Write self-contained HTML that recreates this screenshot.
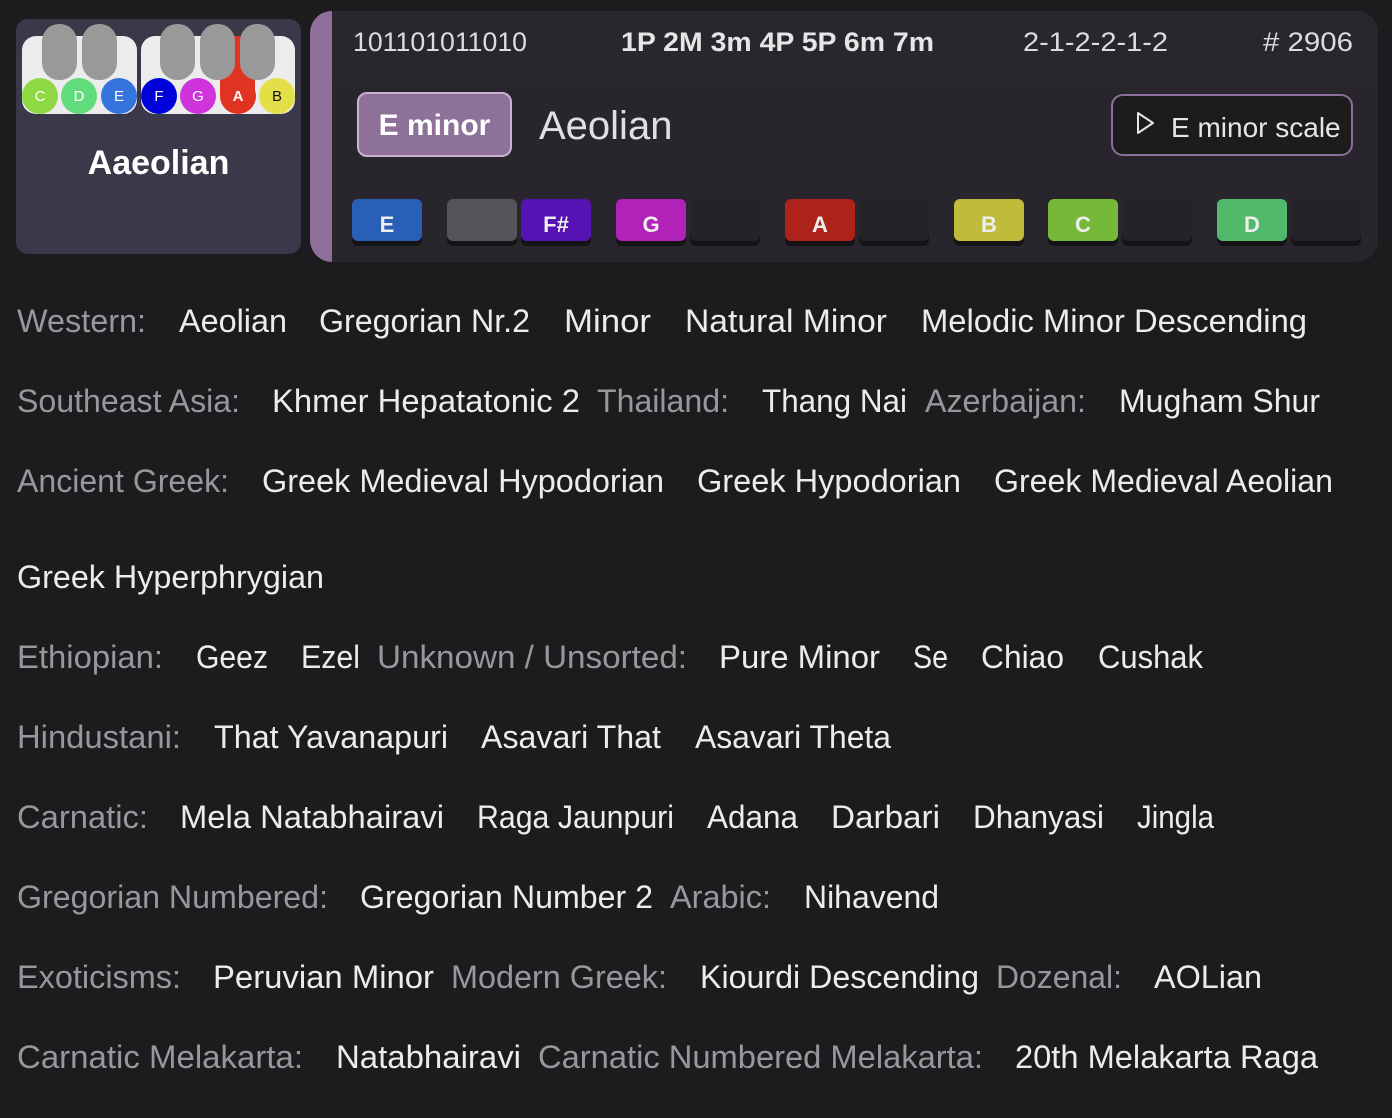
<!DOCTYPE html>
<html><head><meta charset="utf-8"><style>
body{margin:0;width:1392px;height:1118px;background:#1c1c1e;position:relative;overflow:hidden;font-family:"Liberation Sans",sans-serif}
.a{position:absolute}
.card{left:16px;top:19px;width:285px;height:235px;background:#3a3849;border-radius:12px}
.main{left:310px;top:11px;width:1068px;height:251px;background:#28262c;border-radius:22px;overflow:hidden}
.chip{position:absolute;top:199px;width:70px;height:42px;border-radius:6px;box-shadow:0 5px 0 #141416;color:#eee;font-weight:bold;font-size:22px;text-align:center;line-height:52px}
.wk{position:absolute;top:36px;height:78px;background:#ececec;border-radius:14px}
.bk{position:absolute;top:24px;width:35px;height:56px;background:#999;border-radius:17px}
.nc{position:absolute;top:78px;width:36px;height:36px;border-radius:50%;font-size:15px;text-align:center;line-height:38px;color:#fff}
svg text{font-family:"Liberation Sans",sans-serif;font-size:32px}
.l{fill:#98979c}.v{fill:#ececec}
.h{fill:#ddd;font-size:27px}
</style></head><body>
<div class="a card"></div>
<div class="wk" style="left:22px;width:115px"></div>
<div class="wk" style="left:141px;width:154px"></div>
<div class="a" style="left:220px;top:36px;width:35px;height:60px;background:#e03322"></div>
<div class="nc" style="left:22px;background:#8fd944">C</div>
<div class="nc" style="left:61px;background:#62dc7a">D</div>
<div class="nc" style="left:101px;background:#3573dd">E</div>
<div class="nc" style="left:141px;background:#0000d8">F</div>
<div class="nc" style="left:180px;background:#cf34dc">G</div>
<div class="nc" style="left:220px;background:#e03322;font-weight:bold">A</div>
<div class="nc" style="left:259px;background:#e2e046;color:#111">B</div>
<div class="bk" style="left:42px"></div><div class="bk" style="left:82px"></div>
<div class="bk" style="left:160px"></div><div class="bk" style="left:200px"></div><div class="bk" style="left:240px"></div>
<div class="a" style="left:16px;top:144px;width:285px;text-align:center;color:#fff;font-weight:bold;font-size:34px">Aaeolian</div>

<div class="a main">
 <div class="a" style="left:0;top:0;width:22px;height:251px;background:#8e6f99"></div>
 <div class="a" style="left:22px;top:0;right:0;height:76px;background:#29272d"></div>
</div>
<div class="a" style="left:357px;top:92px;width:151px;height:61px;background:#8e7199;border:2px solid #c9b3cf;border-radius:10px;color:#fff;font-weight:bold;font-size:30px;text-align:center;line-height:63px">E minor</div>
<div class="a" style="left:539px;top:104px;color:#e0e0e0;font-size:40px">Aeolian</div>
<div class="a" style="left:1111px;top:94px;width:238px;height:58px;background:#1c1c1e;border:2px solid #8e6f99;border-radius:12px"></div>
<svg class="a" style="left:1136px;top:111px" width="20" height="24"><path d="M2 2 L17 12 L2 22 Z" fill="none" stroke="#e6e6e6" stroke-width="2" stroke-linejoin="round"/></svg>
<div class="a" style="left:1171px;top:112px;color:#e6e6e6;font-size:28px">E minor scale</div>

<div class="chip" style="left:352px;background:#2a5fb8">E</div>
<div class="chip" style="left:447px;background:#555459"></div>
<div class="chip" style="left:521px;background:#5712b4">F#</div>
<div class="chip" style="left:616px;background:#b022b8">G</div>
<div class="chip" style="left:690px;background:#252328"></div>
<div class="chip" style="left:785px;background:#ad2219">A</div>
<div class="chip" style="left:859px;background:#252328"></div>
<div class="chip" style="left:954px;background:#bfbc3b">B</div>
<div class="chip" style="left:1048px;background:#76b939">C</div>
<div class="chip" style="left:1122px;background:#252328"></div>
<div class="chip" style="left:1217px;background:#50b96a">D</div>
<div class="chip" style="left:1291px;background:#252328"></div>

<svg class="a" style="left:0;top:0" width="1392" height="1118">
<text class="h" x="353" y="51" textLength="174" lengthAdjust="spacingAndGlyphs">101101011010</text>
<text class="h" x="621" y="51" textLength="313" lengthAdjust="spacingAndGlyphs" style="font-weight:bold;fill:#e6e6e6">1P 2M 3m 4P 5P 6m 7m</text>
<text class="h" x="1023" y="51" textLength="145" lengthAdjust="spacingAndGlyphs">2-1-2-2-1-2</text>
<text class="h" x="1263" y="51" textLength="90" lengthAdjust="spacingAndGlyphs"># 2906</text>
<g>
<text class="l" x="17" y="332" textLength="129" lengthAdjust="spacingAndGlyphs">Western:</text>
<text class="v" x="179" y="332" textLength="108" lengthAdjust="spacingAndGlyphs">Aeolian</text>
<text class="v" x="319" y="332" textLength="211" lengthAdjust="spacingAndGlyphs">Gregorian Nr.2</text>
<text class="v" x="564" y="332" textLength="87" lengthAdjust="spacingAndGlyphs">Minor</text>
<text class="v" x="685" y="332" textLength="202" lengthAdjust="spacingAndGlyphs">Natural Minor</text>
<text class="v" x="921" y="332" textLength="386" lengthAdjust="spacingAndGlyphs">Melodic Minor Descending</text>

<text class="l" x="17" y="412" textLength="223" lengthAdjust="spacingAndGlyphs">Southeast Asia:</text>
<text class="v" x="272" y="412" textLength="308" lengthAdjust="spacingAndGlyphs">Khmer Hepatatonic 2</text>
<text class="l" x="597" y="412" textLength="132" lengthAdjust="spacingAndGlyphs">Thailand:</text>
<text class="v" x="762" y="412" textLength="145" lengthAdjust="spacingAndGlyphs">Thang Nai</text>
<text class="l" x="925" y="412" textLength="161" lengthAdjust="spacingAndGlyphs">Azerbaijan:</text>
<text class="v" x="1119" y="412" textLength="201" lengthAdjust="spacingAndGlyphs">Mugham Shur</text>

<text class="l" x="17" y="492" textLength="212" lengthAdjust="spacingAndGlyphs">Ancient Greek:</text>
<text class="v" x="262" y="492" textLength="402" lengthAdjust="spacingAndGlyphs">Greek Medieval Hypodorian</text>
<text class="v" x="697" y="492" textLength="264" lengthAdjust="spacingAndGlyphs">Greek Hypodorian</text>
<text class="v" x="994" y="492" textLength="339" lengthAdjust="spacingAndGlyphs">Greek Medieval Aeolian</text>

<text class="v" x="17" y="588" textLength="307" lengthAdjust="spacingAndGlyphs">Greek Hyperphrygian</text>

<text class="l" x="17" y="668" textLength="146" lengthAdjust="spacingAndGlyphs">Ethiopian:</text>
<text class="v" x="196" y="668" textLength="72" lengthAdjust="spacingAndGlyphs">Geez</text>
<text class="v" x="301" y="668" textLength="59" lengthAdjust="spacingAndGlyphs">Ezel</text>
<text class="l" x="377" y="668" textLength="310" lengthAdjust="spacingAndGlyphs">Unknown / Unsorted:</text>
<text class="v" x="719" y="668" textLength="161" lengthAdjust="spacingAndGlyphs">Pure Minor</text>
<text class="v" x="913" y="668" textLength="35" lengthAdjust="spacingAndGlyphs">Se</text>
<text class="v" x="981" y="668" textLength="83" lengthAdjust="spacingAndGlyphs">Chiao</text>
<text class="v" x="1098" y="668" textLength="105" lengthAdjust="spacingAndGlyphs">Cushak</text>

<text class="l" x="17" y="748" textLength="164" lengthAdjust="spacingAndGlyphs">Hindustani:</text>
<text class="v" x="214" y="748" textLength="234" lengthAdjust="spacingAndGlyphs">That Yavanapuri</text>
<text class="v" x="481" y="748" textLength="180" lengthAdjust="spacingAndGlyphs">Asavari That</text>
<text class="v" x="695" y="748" textLength="196" lengthAdjust="spacingAndGlyphs">Asavari Theta</text>

<text class="l" x="17" y="828" textLength="131" lengthAdjust="spacingAndGlyphs">Carnatic:</text>
<text class="v" x="180" y="828" textLength="264" lengthAdjust="spacingAndGlyphs">Mela Natabhairavi</text>
<text class="v" x="477" y="828" textLength="197" lengthAdjust="spacingAndGlyphs">Raga Jaunpuri</text>
<text class="v" x="707" y="828" textLength="91" lengthAdjust="spacingAndGlyphs">Adana</text>
<text class="v" x="831" y="828" textLength="109" lengthAdjust="spacingAndGlyphs">Darbari</text>
<text class="v" x="973" y="828" textLength="131" lengthAdjust="spacingAndGlyphs">Dhanyasi</text>
<text class="v" x="1137" y="828" textLength="77" lengthAdjust="spacingAndGlyphs">Jingla</text>

<text class="l" x="17" y="908" textLength="311" lengthAdjust="spacingAndGlyphs">Gregorian Numbered:</text>
<text class="v" x="360" y="908" textLength="293" lengthAdjust="spacingAndGlyphs">Gregorian Number 2</text>
<text class="l" x="670" y="908" textLength="101" lengthAdjust="spacingAndGlyphs">Arabic:</text>
<text class="v" x="804" y="908" textLength="135" lengthAdjust="spacingAndGlyphs">Nihavend</text>

<text class="l" x="17" y="988" textLength="164" lengthAdjust="spacingAndGlyphs">Exoticisms:</text>
<text class="v" x="213" y="988" textLength="221" lengthAdjust="spacingAndGlyphs">Peruvian Minor</text>
<text class="l" x="451" y="988" textLength="216" lengthAdjust="spacingAndGlyphs">Modern Greek:</text>
<text class="v" x="700" y="988" textLength="279" lengthAdjust="spacingAndGlyphs">Kiourdi Descending</text>
<text class="l" x="996" y="988" textLength="126" lengthAdjust="spacingAndGlyphs">Dozenal:</text>
<text class="v" x="1154" y="988" textLength="108" lengthAdjust="spacingAndGlyphs">AOLian</text>

<text class="l" x="17" y="1068" textLength="286" lengthAdjust="spacingAndGlyphs">Carnatic Melakarta:</text>
<text class="v" x="336" y="1068" textLength="185" lengthAdjust="spacingAndGlyphs">Natabhairavi</text>
<text class="l" x="538" y="1068" textLength="445" lengthAdjust="spacingAndGlyphs">Carnatic Numbered Melakarta:</text>
<text class="v" x="1015" y="1068" textLength="303" lengthAdjust="spacingAndGlyphs">20th Melakarta Raga</text>
</g>
</svg>
</body></html>
